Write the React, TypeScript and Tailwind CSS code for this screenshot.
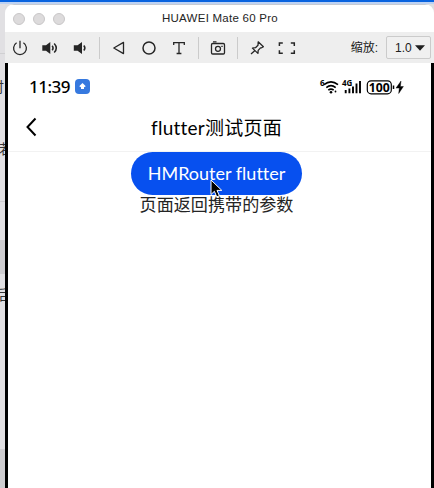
import React from "react";

const ui = "font-['Liberation_Sans','Noto_Sans_CJK_SC',sans-serif]";
const phone = "font-['Lato','Noto_Sans_CJK_SC',sans-serif] [font-variant-ligatures:none]";

function Tool({ children }: { children: React.ReactNode }) {
  return (
    <button className="flex h-[31px] w-[30px] shrink-0 items-center justify-center text-[#262626]">
      <svg width="20" height="20" viewBox="0 0 20 20" fill="none" stroke="currentColor" strokeWidth="1.3">
        {children}
      </svg>
    </button>
  );
}

function Divider() {
  return (
    <div className="flex w-[9px] shrink-0 justify-center">
      <div className="h-[22px] w-px bg-[#cbcbcb]" />
    </div>
  );
}

function Toolbar() {
  return (
    <div className={`flex h-[31px] shrink-0 items-center bg-[#eeeeee] ${ui}`}>
      <Tool>
        <path d="M10 2.8v7.4M6.6 4.8a6.4 6.4 0 1 0 6.8 0" />
      </Tool>
      <Tool>
        <path d="M2.3 7.3H6L10.3 4v12L6 12.7H2.3z" fill="currentColor" stroke="none" />
        <path d="M12.2 7.7q1.8 2.3 0 4.6M14.2 5.4q4.2 4.6 0 9.2" strokeWidth="1.5" />
      </Tool>
      <Tool>
        <path d="M3.8 7.3h3.8L12 4v12l-4.4-3.3H3.8z" fill="currentColor" stroke="none" />
        <path d="M13.8 7.5q2.2 2.5 0 5" strokeWidth="1.5" />
      </Tool>
      <Divider />
      <Tool>
        <path d="M14.5 4.4v11.2L4.8 10z" strokeLinejoin="round" />
      </Tool>
      <Tool>
        <circle cx="10" cy="10" r="6" strokeWidth="1.5" />
      </Tool>
      <Tool>
        <path d="M4.7 7V4.6h10.6V7M10 4.6v11M7.6 15.5h4.8" />
      </Tool>
      <Divider />
      <Tool>
        <rect x="3.5" y="5.5" width="13" height="10.5" rx="1.2" />
        <circle cx="10" cy="10.8" r="2.5" />
        <path d="M5 3.9h3.500M13.300 8.300h1.400" />
      </Tool>
      <Divider />
      <Tool>
        <path d="m11.200 3.800 5.200 5-1.800 1-1.100.1-2.300 2.500-.3 3-5.500-5.300 3.100-.4 2.500-2.500zM8 12.600l-4 3.500" strokeLinejoin="round" />
      </Tool>
      <Tool>
        <path d="M2.400 8V5h3.400M13.800 5h3.500v3M2.400 12.300v3h3.400M13.800 15.300h3.500v-3" strokeWidth="1.5" />
      </Tool>
      <div className="ml-auto flex items-center pr-[3px]">
        <span className="mr-[8px] text-[12px] leading-none text-[#202020]">缩放:</span>
        <button className="flex h-[23px] w-[45px] items-center rounded-[2px] border border-[#cbcbcb] bg-[#f0f0f0] pl-[8px] text-[12px] leading-none text-[#202020]">
          1.0
          <svg className="ml-[3px]" width="10" height="6" viewBox="0 0 10 6">
            <path d="M0 .3h10L5 5.800z" fill="#202020" />
          </svg>
        </button>
      </div>
    </div>
  );
}

function StatusBar() {
  return (
    <div className="flex h-[47px] shrink-0 items-center pl-[21px]">
      <span className="w-[46px] text-[17px] font-medium leading-none tracking-[-0.5px] font-['Noto_Sans',sans-serif]">11:39</span>
      <div className="flex size-[15px] items-center justify-center rounded-[4px] bg-[#3679df]">
        <svg width="9" height="9" viewBox="0 0 9 9">
          <path d="M4.500 1 7.800 4.200 6 5.200V7H3V5.200L1.200 4.200z" fill="white" />
        </svg>
      </div>
      <div className="ml-auto flex items-center pr-[26px]">
        <svg width="86" height="20" viewBox="0 0 86 20" fill="none" stroke="black" className="font-['Noto_Sans',sans-serif]">
          <text x="1" y="8.500" fontSize="8" fontWeight="700" fill="black" stroke="none">6</text>
          <path d="M5 7.700q7-5.800 14 0M7.300 10.600q4.700-4 9.400 0M9.300 13.200q2.700-2.200 5.400 0" strokeWidth="1.6" />
          <circle cx="12" cy="15.200" r="1.300" fill="black" stroke="none" />
          <circle cx="16.500" cy="14.500" r="0.900" fill="black" stroke="none" />
          <text x="23" y="9" fontSize="8" fontWeight="700" fill="black" stroke="none">4G</text>
          <path d="M26.700 13v3.300M30.400 11.500v4.800M34 9.500v6.800M37.500 6.500v9.800M41 4v12.300" strokeWidth="1.9" />
          <rect x="48.300" y="3.800" width="24" height="13" rx="3.800" strokeWidth="1.2" />
          <text x="60.300" y="14.900" fontSize="12.500" textLength="21" lengthAdjust="spacingAndGlyphs" fontWeight="700" textAnchor="middle" fill="black" stroke="none">100</text>
          <path d="M74.500 8.400v3.600" strokeWidth="1.5" />
          <path d="m82 4-5 7.100h3.300l-.6 5.400 4.700-7h-3z" fill="black" stroke="black" strokeWidth="0.4" />
        </svg>
      </div>
    </div>
  );
}

export default function App() {
  return (
    <div className="flex h-[488px] w-[434px] flex-col overflow-hidden bg-[#dfdfe1]">
      <div className="h-[2px] shrink-0 bg-[#0863df]" />
      <div className="h-[2px] shrink-0 bg-[#bdd2f3]" />
      <div className="flex min-h-0 flex-1">
        <aside className={`flex w-[5px] shrink-0 flex-col overflow-hidden bg-[#e1e0e3] text-[14px] leading-[18px] text-[#333] ${ui}`}>
          <div className="h-[50px] shrink-0 border-b border-[#d0d0d2]" />
          <div className="h-[24px] shrink-0" />
          <div className="-ml-[10px] h-[62px] w-[16px] shrink-0 whitespace-nowrap">时</div>
          <div className="-ml-[1px] h-[61px] w-[16px] shrink-0">若</div>
          <div className="h-[39px] shrink-0 border-t border-[#cecdd0]" />
          <div className="h-[34px] shrink-0 bg-[#cecdd0]" />
          <div className="h-[12px] shrink-0" />
          <div className="-ml-[4px] h-[163px] w-[16px] shrink-0">后</div>
          <div className="flex-1 bg-[#cecdd0]" />
        </aside>
        <main className="flex min-w-0 flex-1 flex-col overflow-hidden rounded-t-[9px] bg-white">
          <header className={`flex h-[28px] shrink-0 items-center border-t border-[#c7cbd2] pl-[8px] ${ui}`}>
            <div className="flex gap-[8px]">
              <span className="size-[12px] rounded-full border border-[#c8c6c7] bg-[#dddbdc]" />
              <span className="size-[12px] rounded-full border border-[#c8c6c7] bg-[#dddbdc]" />
              <span className="size-[12px] rounded-full border border-[#c8c6c7] bg-[#dddbdc]" />
            </div>
            <h1 className="ml-[97px] whitespace-nowrap text-[11.5px] tracking-[0.25px] text-[#242424]">HUAWEI Mate 60 Pro</h1>
          </header>
          <Toolbar />
          <section className={`flex min-h-0 flex-1 flex-col border-x-[3px] border-black bg-white text-black ${phone}`}>
            <StatusBar />
            <div className="flex h-[42px] shrink-0 items-center border-b border-[#f2f2f2] pb-[7px] pl-[16px]">
              <svg width="14" height="20" viewBox="0 0 14 20" fill="none" stroke="black" strokeWidth="2">
                <path d="m11.500 1.500-8 8.500 8 8.500" />
              </svg>
              <h2 className="ml-[113px] whitespace-nowrap text-[19px] leading-none tracking-[0.25px]">flutter测试页面</h2>
            </div>
            <div className="relative flex flex-col items-center pr-[6px]">
              <button className="h-[43px] w-[171px] whitespace-nowrap rounded-full bg-[#0750ef] text-[18px] text-white">HMRouter flutter</button>
              <p className="whitespace-nowrap text-[17.1px] leading-[20px] text-[#242424]">页面返回携带的参数</p>
              <svg className="absolute left-[202px] top-[27px]" width="13" height="20" viewBox="0 0 13 20">
                <path d="M1 1v14.500l3.400-3.200 2.300 5.500 2.700-1.100-2.400-5.300h4.800z" fill="black" stroke="white" />
              </svg>
            </div>
          </section>
        </main>
      </div>
    </div>
  );
}
